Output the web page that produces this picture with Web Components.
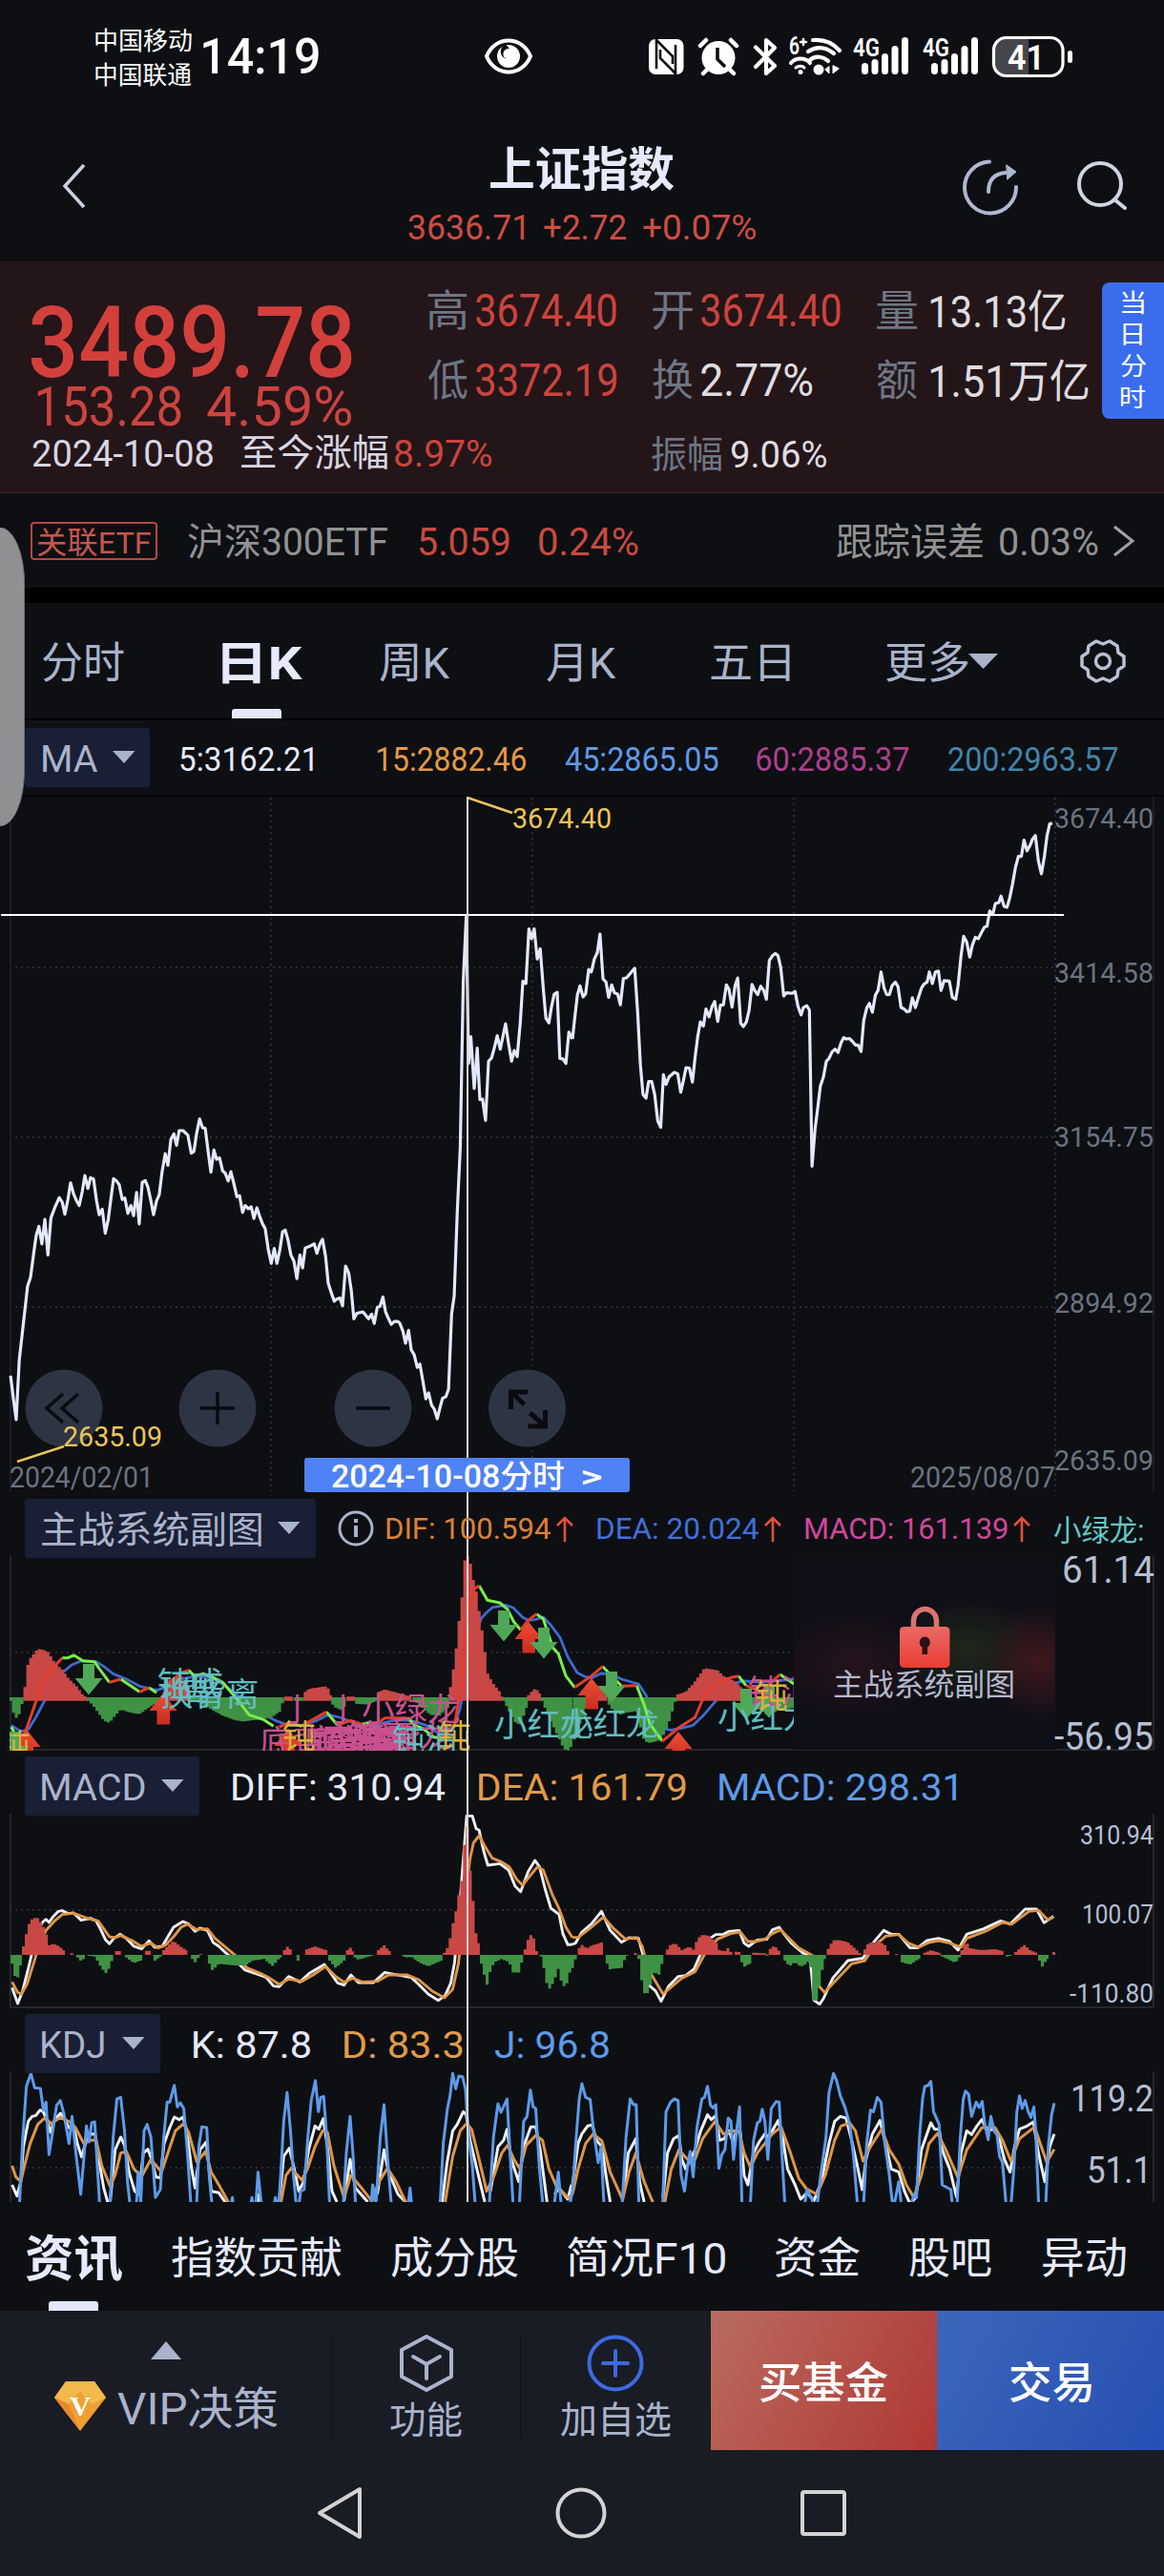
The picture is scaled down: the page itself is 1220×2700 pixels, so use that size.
<!DOCTYPE html>
<html lang="zh-CN">
  <head>
    <meta charset="UTF-8" />
    <meta name="viewport" content="width=device-width, initial-scale=1.0" />
    <title>上证指数</title>
    <style>
      body {
        margin: 0;
        width: 1220px;
        height: 2700px;
        overflow: hidden;
        background: #0d0f13;
        color: #e6eafc;
        font-family: Roboto, "Noto Sans CJK SC", sans-serif;
      }
      main {
        position: relative;
      }
    </style>
  </head>
  <body>
    <main>
      <phone-status></phone-status>
      <title-bar></title-bar>
      <quote-panel></quote-panel>
      <etf-row></etf-row>
      <period-tabs></period-tabs>
      <ma-row></ma-row>
      <chart-stack>
        <price-chart></price-chart>
        <sub-chart kind="dragon" box="305">
          <fit-text slot="name" w="230" s="39">主战系统副图</fit-text>
          <svg width="38" height="38" viewBox="0 0 38 38" fill="none" stroke="#a9b3cb" stroke-width="3" style="margin-left: 23px"><circle cx="19" cy="19" r="17" /><path d="M19 16v12M19 9v4" stroke-width="4" /></svg>
          <fit-text w="172" s="31" gap="13" dy="0" style="color: #dd8038">DIF: 100.594</fit-text>
          <up-mark></up-mark>
          <fit-text w="169" s="31" gap="25" dy="0" style="color: #4170d8">DEA: 20.024</fit-text>
          <up-mark></up-mark>
          <fit-text w="212" s="31" gap="25" dy="0" style="color: #d0489a">MACD: 161.139</fit-text>
          <up-mark></up-mark>
          <fit-text w="94" s="31" gap="24" style="color: #62c8c6">小绿龙:</fit-text>
        </sub-chart>
        <sub-chart kind="macd" box="183">
          <fit-text slot="name" w="108" s="39">MACD</fit-text>
          <fit-text w="223" s="39" gap="35">DIFF: 310.94</fit-text>
          <fit-text w="217" s="39" gap="35" style="color: #e39a48">DEA: 161.79</fit-text>
          <fit-text w="248" s="39" gap="35" style="color: #5d9bea">MACD: 298.31</fit-text>
        </sub-chart>
        <sub-chart kind="kdj" box="142">
          <fit-text slot="name" w="65" s="39">KDJ</fit-text>
          <fit-text w="122" s="39" gap="35">K: 87.8</fit-text>
          <fit-text w="124" s="39" gap="36" style="color: #e39a48">D: 83.3</fit-text>
          <fit-text w="119" s="39" gap="34" style="color: #5d9bea">J: 96.8</fit-text>
        </sub-chart>
      </chart-stack>
      <news-tabs></news-tabs>
      <bottom-bar></bottom-bar>
      <nav-keys></nav-keys>
      <side-handle></side-handle>
    </main>

    <script>
      // text squeezed or stretched so that its ink is exactly "w" px wide
      const ruler = document.createElement("canvas").getContext("2d");
      class FitText extends HTMLElement {
        connectedCallback() {
          if (this.shadowRoot) return;
          const w = +this.getAttribute("w");
          const dy = this.getAttribute("dy") || 2;
          const shadow = this.attachShadow({ mode: "open" });
          this.style.fontSize = this.getAttribute("s") + "px";
          this.style.width = w + "px";
          this.style.marginLeft = (this.getAttribute("gap") || 0) + "px";
          shadow.innerHTML = `
            <style>
              :host { display: block; flex: none; line-height: 1; white-space: nowrap; }
              span { display: block; width: max-content; transform-origin: 0 50%; }
            </style>
            <span><slot></slot></span>`;
          const cs = getComputedStyle(this);
          ruler.font = `${cs.fontWeight} ${cs.fontSize} ${cs.fontFamily}`;
          const m = ruler.measureText(this.textContent);
          const k = w / (m.actualBoundingBoxLeft + m.actualBoundingBoxRight);
          shadow.querySelector("span").style.transform =
            `translate(${m.actualBoundingBoxLeft * k}px, ${dy}px) scaleX(${k})`;
        }
      }
      customElements.define("fit-text", FitText);

      // small factory for the elements that only have markup
      function define(name, html) {
        customElements.define(
          name,
          class extends HTMLElement {
            connectedCallback() {
              if (this.shadowRoot) return;
              this.attachShadow({ mode: "open" }).innerHTML = html;
            }
          }
        );
      }

      define("up-mark", `
        <style>:host { display: block; flex: none; width: 18px; margin-left: 6px; height: 27px; }</style>
        <svg width="18" height="27" viewBox="0 0 18 27" fill="none" stroke="#e2513d" stroke-width="2.6"><path d="M9 27V2M1 10l8-8 8 8" /></svg>`);

      const bars4g = `
        <svg width="57" height="40" viewBox="0 0 57 40" fill="#fff">
          <text x="-1" y="20" font-size="26" font-weight="600" textLength="28" lengthAdjust="spacingAndGlyphs">4G</text>
          <rect x="8" y="27" width="7" height="12" rx="3.5" /><rect x="18.5" y="23" width="7" height="16" rx="3.5" />
          <rect x="29" y="17" width="7" height="22" rx="3.5" /><rect x="39.5" y="9" width="7" height="30" rx="3.5" /><rect x="50" y="0" width="7" height="39" rx="3.5" />
        </svg>`;

      define("phone-status", `
        <style>
          :host { display: flex; align-items: center; height: 118px; color: #fff; }
          .ops { display: grid; gap: 10px; margin-left: 100px; }
          svg { display: block; flex: none; overflow: visible; }
        </style>
        <div class="ops">
          <fit-text w="101" s="26">中国移动</fit-text>
          <fit-text w="101" s="26">中国联通</fit-text>
        </div>
        <fit-text w="121" s="52" gap="12" dy="1" style="font-weight: 500">14:19</fit-text>
        <svg width="52" height="38" viewBox="0 0 52 38" style="margin-left: 173px">
          <path d="M3 19C12 -3 40 -3 49 19C40 41 12 41 3 19Z" fill="none" stroke="#fff" stroke-width="4" />
          <circle cx="26" cy="19" r="12" fill="#fff" /><path d="M23 6.500a8 8 0 0 0 2 15.500a5.500 5.500 0 0 1 2-11z" fill="#0d0f13" />
        </svg>
        <svg width="37" height="37" viewBox="0 0 37 37" style="margin-left: 121px">
          <rect width="36.500" height="37" rx="7" fill="#fff" />
          <g fill="none" stroke="#0d0f13" stroke-width="2.600"><path d="M8 0v31M28 37V6" /><path d="M8 1l17 17v8M28 36L12 20V11" /></g>
        </svg>
        <svg width="42" height="39" viewBox="0 0 42 39" style="margin-left: 15px">
          <circle cx="21" cy="20.500" r="17.500" fill="#fff" />
          <path d="M2 8l6-6M40 8l-6-6M5 37l5-5M37 37l-5-5" stroke="#fff" stroke-width="4.500" stroke-linecap="round" />
          <path d="M20 10v12l8 8" fill="none" stroke="#0d0f13" stroke-width="3.600" />
        </svg>
        <svg width="25" height="39" viewBox="0 0 25 39" style="margin-left: 16px" fill="none" stroke="#fff" stroke-width="4.200" stroke-linejoin="round" stroke-linecap="round">
          <path d="M2 9.500L22 29l-9 8V2l9 8L2 30" />
        </svg>
        <svg width="56" height="42" viewBox="0 0 56 42" style="margin: -2px 0 0 12px" fill="none" stroke="#fff" stroke-width="4.200" stroke-linecap="round">
          <text x="0" y="20" font-size="25" font-weight="600" fill="#fff" stroke="none" textLength="11" lengthAdjust="spacingAndGlyphs">6</text>
          <path d="M12 7h6M15 4v6" stroke-width="2.500" />
          <path d="M25 5c11-1 21 3 28 11M20 17c9-6 18-5 27 2M2 29c5-6 15-6 20 0M22 26c5-5 14-4 19 1" />
          <path d="M7 34c3-2.500 7-2.500 9 0" stroke-width="3" />
          <circle cx="12" cy="38.500" r="2.500" fill="#fff" stroke="none" /><circle cx="31" cy="36" r="5.500" fill="#fff" stroke="none" />
          <path d="M42 33v7l-4-4zM46 32v8l6-5z" fill="#fff" stroke-width="1" />
        </svg>
        <div style="margin-left: 12px">${bars4g}</div>
        <div style="margin-left: 16px">${bars4g}</div>
        <svg width="86" height="44" viewBox="0 0 86 44" style="margin: 2px 0 0 15px">
          <path d="M16 2h22v39H16a14 14 0 0 1-14-14V16A14 14 0 0 1 16 2z" fill="#45464a" />
          <rect x="1.500" y="1.500" width="72.500" height="40" rx="13" fill="none" stroke="#fff" stroke-width="3.200" />
          <rect x="79" y="15" width="5" height="13" rx="2.500" fill="#fff" />
          <text x="16" y="35" font-size="36" font-weight="600" fill="#fff" textLength="39" lengthAdjust="spacingAndGlyphs">41</text>
        </svg>`);

      define("title-bar", `
        <style>
          :host { display: flex; height: 156px; }
          .mid { width: 364px; margin-left: 338px; color: #cd4d44; }
          .nums { display: flex; margin-top: 17px; }
          svg { display: block; flex: none; }
        </style>
        <svg width="26" height="48" viewBox="0 0 26 48" style="margin: 53px 0 0 64px" fill="none" stroke="#ccd0df" stroke-width="3.500"><path d="M24 2L4 24l20 22" /></svg>
        <div class="mid">
          <fit-text w="193" s="49" gap="86" dy="1" style="color: #e6eafc; font-weight: 700; margin-top: 35px">上证指数</fit-text>
          <div class="nums">
            <fit-text w="121" s="36">3636.71</fit-text>
            <fit-text w="86" s="36" gap="21">+2.72</fit-text>
            <fit-text w="118" s="36" gap="18">+0.07%</fit-text>
          </div>
        </div>
        <svg width="60" height="60" viewBox="0 0 60 60" style="margin: 48px 0 0 216px" fill="none" stroke="#adb8d0" stroke-width="4" stroke-linecap="round">
          <path d="M29 3.500A27 27 0 1 0 57 30M28 35c0-12 6-19 18-20" />
          <path d="M47 7l10 7-9 8z" fill="#adb8d0" stroke-width="1" />
        </svg>
        <svg width="56" height="52" viewBox="0 0 56 52" style="margin: 51px 0 0 60px" fill="none" stroke="#d0d4e2" stroke-width="4" stroke-linecap="round">
          <circle cx="25" cy="24" r="22" /><path d="M40 40l11 9" />
        </svg>`);

      define("quote-panel", `
        <style>
          :host { display: flex; height: 243px; background: #241519; border-bottom: 1px solid #2b2b2f; box-sizing: border-box; color: #cb443e; }
          .left { width: 416px; padding-left: 32px; }
          .row { display: flex; align-items: center; }
          .g { color: #6d7684; }
          .w { color: #dedde0; }
          .stats { display: grid; grid-template-columns: 235px 236px 236px; grid-template-rows: 72px 74px 82px; margin-top: 14px; }
          .tab { width: 65px; height: 143px; margin-top: 22px; background: #3a6cee; border-radius: 8px 0 0 8px; color: #fff;
            display: grid; align-content: start; justify-content: center; gap: 7px; padding-top: 7px; box-sizing: border-box; }
        </style>
        <div class="left">
          <fit-text w="337" s="103" dy="1" style="color: #d3403c; font-weight: 500; margin-top: 33px">3489.78</fit-text>
          <div class="row" style="margin-top: -13px">
            <fit-text w="151" s="58" gap="7" dy="0">153.28</fit-text>
            <fit-text w="151" s="58" gap="27" dy="0">4.59%</fit-text>
          </div>
          <div class="row" style="margin-top: 0">
            <fit-text w="189" s="39" gap="2" style="color: #d7d6e2">2024-10-08</fit-text>
            <fit-text w="154" s="39" gap="30" dy="1" style="color: #d7d6e2">至今涨幅</fit-text>
            <fit-text w="101" s="39" gap="7">8.97%</fit-text>
          </div>
        </div>
        <div class="stats">
          <div class="row"><fit-text class="g" w="42" s="45">高</fit-text><fit-text w="147" s="48" gap="9">3674.40</fit-text></div>
          <div class="row"><fit-text class="g" w="42" s="45" gap="1">开</fit-text><fit-text w="146" s="48" gap="9">3674.40</fit-text></div>
          <div class="row w"><fit-text class="g" w="42" s="45">量</fit-text><fit-text w="142" s="47" gap="14">13.13亿</fit-text></div>
          <div class="row"><fit-text class="g" w="42" s="45">低</fit-text><fit-text w="147" s="48" gap="9">3372.19</fit-text></div>
          <div class="row w"><fit-text class="g" w="42" s="45" gap="1">换</fit-text><fit-text w="117" s="48" gap="9">2.77%</fit-text></div>
          <div class="row w"><fit-text class="g" w="42" s="45">额</fit-text><fit-text w="166" s="47" gap="14">1.51万亿</fit-text></div>
          <div></div>
          <div class="row w"><fit-text class="g" w="74" s="39">振幅</fit-text><fit-text w="100" s="39" gap="9">9.06%</fit-text></div>
        </div>
        <div class="tab">
          <fit-text w="24" s="26">当</fit-text>
          <fit-text w="20" s="26" gap="2">日</fit-text>
          <fit-text w="26" s="26">分</fit-text>
          <fit-text w="25" s="26">时</fit-text>
        </div>`);

      define("etf-row", `
        <style>
          :host { display: flex; align-items: center; height: 99px; border-bottom: 16px solid #000; color: #929292; }
          .tag { box-sizing: border-box; width: 133px; height: 40px; margin-left: 32px; border: 2px solid #b9473f; border-radius: 4px; padding: 2px 5px; color: #c8554c; }
          .r { color: #c94a42; }
        </style>
        <div class="tag"><fit-text w="119" s="32">关联ETF</fit-text></div>
        <fit-text w="209" s="40" gap="32">沪深300ETF</fit-text>
        <fit-text class="r" w="94" s="41" gap="34">5.059</fit-text>
        <fit-text class="r" w="104" s="41" gap="31">0.24%</fit-text>
        <fit-text w="153" s="40" gap="208">跟踪误差</fit-text>
        <fit-text w="103" s="41" gap="18">0.03%</fit-text>
        <svg width="24" height="34" viewBox="0 0 24 34" style="margin-left: 15px" fill="none" stroke="#a2a2a2" stroke-width="3"><path d="M2 2l19 15L2 32" /></svg>`);

      define("period-tabs", `
        <style>
          :host { display: flex; align-items: center; height: 123px; border-bottom: 2px solid #020203; color: #a9b3cb; box-sizing: border-box; }
          .on { display: grid; align-content: end; height: 121px; width: 88px; margin-left: 103px; gap: 26px; color: #e6eafc; font-weight: 700; }
          .on i { height: 10px; width: 52px; margin-left: 10px; background: #e3e8fb; border-radius: 3px 3px 0 0; }
        </style>
        <fit-text w="86" s="45" gap="44" dy="3">分时</fit-text>
        <div class="on"><fit-text w="84" s="48" dy="3">日K</fit-text><i></i></div>
        <fit-text w="74" s="45" gap="77" dy="3">周K</fit-text>
        <fit-text w="73" s="45" gap="101" dy="3">月K</fit-text>
        <fit-text w="83" s="45" gap="99" dy="3">五日</fit-text>
        <fit-text w="86" s="45" gap="101" dy="3">更多</fit-text>
        <svg width="32" height="18" viewBox="0 0 32 18"><path d="M0 1h31L15.500 17z" fill="#a9b3cb" /></svg>
        <svg width="50" height="48" viewBox="-25 -24 50 48" style="margin-left: 84px" fill="none" stroke="#b8c0d4" stroke-width="3.500" stroke-linejoin="round">
          <path d="M-7-21L0-18L7-21L15-16L16-9L22-5V5L16 9L15 16L7 21L0 18L-7 21L-15 16L-16 9L-22 5V-5L-16-9L-15-16Z" />
          <circle r="7.500" />
        </svg>`);

      define("ma-row", `
        <style>
          :host { display: flex; align-items: center; height: 80px; border-bottom: 2px solid #050608; box-sizing: border-box; }
          .pick { display: flex; align-items: center; width: 131px; height: 62px; margin-left: 26px; background: #191f34; border-radius: 3px; color: #a9b3cb; }
        </style>
        <div class="pick">
          <fit-text w="57" s="39" gap="19">MA</fit-text>
          <svg width="24" height="14" viewBox="0 0 24 14" style="margin-left: 16px"><path d="M0 0h23.500L12 13z" fill="#a9b3cb" /></svg>
        </div>
        <fit-text w="139" s="35" gap="32">5:3162.21</fit-text>
        <fit-text w="156" s="35" gap="67" style="color: #e39a48">15:2882.46</fit-text>
        <fit-text w="161" s="35" gap="41" style="color: #6199e6">45:2865.05</fit-text>
        <fit-text w="160" s="35" gap="40" style="color: #ad3f8c">60:2885.37</fit-text>
        <fit-text w="178" s="35" gap="41" style="color: #4584a8">200:2963.57</fit-text>`);

      // wraps the four charts and draws the vertical cross hair over them
      define("chart-stack", `
        <style>
          :host { display: block; position: relative; height: 1473px; overflow: hidden; }
          i { position: absolute; left: 489px; top: 0; width: 2px; height: 1473px; background: #d8d6d4; }
          a { position: absolute; left: 319px; top: 693px; width: 341px; height: 36px; background: #4f82f4; border-radius: 3px; display: flex; align-items: center; color: #fff; font-weight: 500; }
        </style>
        <slot></slot><i></i>
        <a><fit-text w="243" s="33" gap="29" dy="1">2024-10-08分时</fit-text><fit-text w="19" s="33" gap="20" dy="1">&gt;</fit-text></a>`);

      /* ---- chart drawing. Traces are kept in grid units: 2.529 units = 1px across,
         the right half of each trace starts at 600px. ---- */
      const KX = 1 / 2.529;
      const HALF = 1517.4;
      const SLOT = 7.62;

      function pts(str, dx) {
        return str.split(";").map((part) =>
          part.trim().split(/\s+/).map((p) => p.split(",").map(Number)).map(([x, y]) => [x + dx, y])
        );
      }
      function trace(left, right, color, width = 2.9) {
        const all = [...pts(left, 0), ...(right ? pts(right, HALF) : [])];
        return all.map((p) =>
          `<polyline points="${p.map((q) => q.join()).join(" ")}" fill="none" stroke="${color}" stroke-width="${width}" stroke-linejoin="round" vector-effect="non-scaling-stroke"/>`
        ).join("");
      }
      // stepped columns, one per trading day, following the given outline
      function columns(left, right, base, color) {
        let d = "";
        for (const p of [...pts(left, 0), ...pts(right, HALF)]) {
          const from = p[0][0], to = p[p.length - 1][0];
          const n = Math.max(1, Math.round((to - from) / SLOT) + 1);
          for (let i = 0; i < n; i++) {
            const x = Math.min(from + i * SLOT, to);
            let k = 0;
            while (k < p.length - 2 && p[k + 1][0] < x) k++;
            const a = p[k], b = p[k + 1] || a;
            const y = b[0] === a[0] ? a[1] : a[1] + ((b[1] - a[1]) * (x - a[0])) / (b[0] - a[0]);
            d += `M${(x - 3.9).toFixed(1)} ${base}V${y.toFixed(1)}h7.8V${base}z`;
          }
        }
        return `<path d="${d}" fill="${color}"/>`;
      }
      function label(x, y, w, size, color, text, extra = "") {
        return `<text x="${x}" y="${y}" font-size="${size}" fill="${color}" textLength="${w}" lengthAdjust="spacingAndGlyphs" ${extra}>${text}</text>`;
      }
      const dots = (d) => `<path d="${d}" stroke="#2b2d31" stroke-width="2" stroke-dasharray="2 4" fill="none"/>`;

      const priceL = "28,1283 35,1330 43,1378 51,1250 62,1170 73,1090 81,1070 89,1020 96,980 103,960 111,998 119,945 127,1022 135,942 145,920 157,898 165,908 172,934 180,902 187,866 195,890 203,905 210,915 218,885 225,850 233,878 240,855 248,858 256,905 263,935 271,923 279,975 287,945 294,900 301,857 309,862 316,870 324,902 331,899 339,932 347,915 354,937 362,887 369,955 377,865 385,861 392,875 400,905 407,935 415,905 422,892 430,840 438,803 445,828 453,772 461,760 468,785 475,753 485,753 498,763 507,802 514,798 521,760 529,728 537,747 544,748 552,800 559,843 567,795 574,815 582,812 590,840 597,845 605,862 612,842 620,868 628,896 635,894 643,930 650,915 658,922 666,918 673,943 681,920 689,940 696,955 703,965 711,1010 719,1040 727,1008 734,1040 742,1010 749,972 756,968 763,988 771,1022 779,1035 787,1073 795,1022 802,1050 809,1007 824,1002 833,998 840,1018 848,998 855,988 863,1025 870,1083 878,1103 886,1122 893,1117 901,1115 908,1132 916,1046 924,1060 931,1098 938,1160 946,1148 962,1145 977,1160 985,1150 992,1170 1000,1135 1007,1133 1015,1113 1022,1145 1030,1160 1037,1172 1045,1166 1055,1166 1060,1170 1068,1187 1075,1213 1083,1185 1090,1227 1098,1238 1106,1265 1113,1258 1121,1295 1129,1333 1136,1320 1144,1347 1151,1355 1159,1376 1167,1350 1173,1332 1182,1328 1189,1312 1197,1150 1204,1110 1212,930 1220,790 1228,430 1236,288 1242,608 1248,550 1257,662 1265,575 1272,686 1279,685 1287,731 1295,603 1303,596 1311,572 1318,548 1326,577 1333,550 1340,522 1348,565 1356,603 1363,580 1371,593 1379,520 1386,430 1394,435 1402,317 1409,338 1416,317 1424,382 1432,360 1440,445 1447,510 1455,520 1462,485 1469,458 1477,454 1484,597 1492,598 1500,608 1508,540 1517,555";
      const priceR = "0,555 6,510 13,460 20,440 28,464 35,457 43,405 50,410 58,382 66,368 73,328 81,425 89,432 96,465 104,438 111,455 120,458 127,481 135,424 143,423 165,402 173,500 180,610 187,675 195,683 202,647 210,647 218,675 226,732 234,746 241,632 248,653 256,637 270,627 279,630 287,670 294,645 301,617 310,618 318,648 325,595 332,550 339,518 347,527 354,490 362,507 370,485 377,474 385,517 392,482 400,481 408,438 415,448 423,486 431,440 438,423 446,521 453,528 461,518 468,494 476,437 483,450 491,459 499,441 507,450 514,469 522,385 530,375 538,370 545,375 552,400 560,462 567,455 583,456 590,452 598,485 606,503 612,487 621,483 628,492 635,830 643,750 650,705 657,657 665,638 673,603 680,597 688,583 696,577 704,584 712,563 719,552 726,555 734,554 742,560 750,568 757,568 765,582 772,515 780,488 787,478 795,497 803,460 810,450 818,410 826,445 833,459 840,459 847,440 856,432 863,442 871,487 879,490 886,496 894,495 901,466 909,487 917,465 925,445 932,436 940,432 946,410 954,435 962,410 970,408 977,450 985,429 999,430 1007,465 1016,469 1022,440 1030,375 1037,333 1045,345 1053,378 1060,352 1068,335 1076,338 1084,325 1092,313 1099,311 1106,278 1114,286 1121,262 1130,260 1136,246 1144,268 1152,270 1159,250 1166,222 1174,185 1182,160 1190,160 1197,125 1205,148 1212,138 1220,122 1227,115 1235,170 1243,198 1251,160 1258,115 1265,90 1272,88";

      const knob = (x, d, w = 3.6) => `<circle cx="${x}" cy="1476" r="40.500" fill="#2d3443"/><path transform="translate(${x} 1476)" d="${d}" fill="none" stroke="#0a0b10" stroke-width="${w}"/>`;

      define("price-chart", `
        <style>:host { display: block; height: 731px; } svg { display: block; }</style>
        <svg width="1220" height="731" viewBox="0 835 1220 731">
          <path d="M11 835V1563M1209 835V1563" stroke="#1c1e23" stroke-width="2" />
          ${dots("M284 836V1563M558 836V1563M832 836V1563M1106 836V1563M16 1014H1106M16 1192H1106M16 1370H1106")}
          ${knob(67, "M-1-15l-17 15 17 15M15-15l-17 15 17 15")}
          ${knob(228, "M-18 0h36M0-17v34")}
          ${knob(391, "M-18 0h36")}
          ${knob(552.5, "M-17 1V-17H1M-17-17L-3-4M19 2V19H1M3 5L19 19", 5)}
          <g transform="translate(0 820) scale(${KX} ${1 / 2.063})">${trace(priceL, priceR, "#e3e8fb", 3.2)}</g>
          <path d="M1 959H1115" stroke="#fff" stroke-width="2" />
          <path d="M490 836L537 852M18 1532L67 1516" stroke="#ecc558" stroke-width="2.500" />
          ${label(537, 868, 104, 29, "#ecc558", "3674.40")}
          ${label(66, 1516, 104, 29, "#ecc558", "2635.09")}
          ${label(1105, 868, 104, 30, "#6c7280", "3674.40")}
          ${label(1105, 1030, 104, 30, "#6c7280", "3414.58")}
          ${label(1105, 1202, 104, 30, "#6c7280", "3154.75")}
          ${label(1105, 1376, 104, 30, "#6c7280", "2894.92")}
          ${label(1105, 1541, 104, 30, "#6c7280", "2635.09")}
          ${label(10, 1559, 151, 31, "#6c7280", "2024/02/01")}
          ${label(954, 1559, 152, 31, "#6c7280", "2025/08/07")}
        </svg>`);

      // ---- 主战系统副图 ----
      const up = (x, y) => `<path transform="translate(${x} ${y})" d="M0 0L14.500 18H7V32.500H-6.500V18H-14.500Z" fill="url(#hot)"/>`;
      const down = (x, y) => `<path transform="translate(${x} ${y})" d="M-6 0H6V15H14.500L0 32.500L-14.500 15H-6Z" fill="#4fa857"/>`;
      const word = (x, y, color, text) => `<text x="${x}" y="${y}" font-size="34.500" fill="${color}">${text}</text>`;
      const TEAL = "#62bcc0", PINK = "#c9508f", GOLD = "#d8b13c", RED = "#e43d2c", LIME = "#78f04c";

      function dragonChart() {
        return `
          <defs>
            <linearGradient id="hot" x1="0" y1="0" x2="0" y2="1"><stop offset="0" stop-color="#ee4d34" /><stop offset="1" stop-color="#c92c20" /></linearGradient>
            <linearGradient id="lock" x1="0" y1="0" x2="0" y2="1"><stop offset="0" stop-color="#ea6a66" /><stop offset="1" stop-color="#ea3d32" /></linearGradient>
            <radialGradient id="g1"><stop offset="0" stop-color="#3d1620" /><stop offset="1" stop-color="#3d1620" stop-opacity="0" /></radialGradient>
            <radialGradient id="g2"><stop offset="0" stop-color="#26301a" /><stop offset="1" stop-color="#26301a" stop-opacity="0" /></radialGradient>
            <radialGradient id="g3"><stop offset="0" stop-color="#5a1c22" /><stop offset="1" stop-color="#5a1c22" stop-opacity="0" /></radialGradient>
            <clipPath id="plot"><rect x="10" y="1630" width="822" height="205" /></clipPath>
            <clipPath id="veil"><rect x="832" y="1630" width="274" height="204" /></clipPath>
          </defs>
          <path d="M11 1631V1834M1209 1631V1834M10 1834H1209" stroke="#25272c" stroke-width="2" fill="none" />
          ${dots("M16 1732H832")}
          <g clip-path="url(#plot)">
            <g transform="translate(0 1560) scale(${KX} .33333)">
              ${trace(
                "30,745 55,765 75,758 95,720 115,675 140,620 165,580 190,555 215,543 255,545 275,560 300,583 335,600 370,622 415,635 440,625 480,600 520,590 560,595 590,615 635,655 695,708 730,730 765,745 800,745 840,730 870,712 900,720 940,738 980,748 1050,728 1090,730 1130,745 1160,768 1185,770 1205,745 1220,690 1245,520 1275,410 1290,390 1305,375 1340,367 1360,375 1385,405 1400,415 1420,412 1440,405 1460,430 1485,470 1505,530 1530,580 1550,592 1568,595",
                "50,597 75,582 100,583 130,600 175,615 195,650 215,720 240,755 260,760 285,755 320,745 350,710 380,668 420,620 450,605 500,610 587,600", "#3f6ad0", 2.8)}
              ${columns(
                "66,625 72,560 80,535 100,505 115,508 128,515 145,548 165,570 180,595 205,625 220,650 235,660;435,640 450,605 480,590 500,625;757,655 775,655;809,640 820,630 868,622 876,650;922,655 938,655;1003,640 1020,632 1050,642 1090,655;1194,625 1207,530 1215,435 1227,318 1233,210 1244,210 1252,275 1262,320 1272,400 1282,480 1292,580 1305,610 1325,640 1330,655;1401,650 1408,640 1420,628 1430,645",
                "50,655 60,620 80,630 90,655;279,648 300,640 320,615 350,565 385,572 400,590 430,605 446,625", 668, "#c94846")}
              ${columns(
                "28,668 33,700 45,725 55,700 60,668;234,668 245,680 260,705 275,730 290,738 305,715 320,695 345,705 370,710 400,685 425,668 430,668;505,668 530,675 560,695 590,715 620,728 645,733 680,728 720,720 745,700 750,668;782,668 802,668;882,680 890,690 905,697 916,682;945,677 975,680 998,668;1097,668 1120,690 1140,712 1165,715 1187,690;1335,668 1345,690 1365,735 1380,745 1395,690;1437,668 1455,720 1475,770 1495,820 1510,825 1517,800",
                "5,790 20,740 43,670;97,680 100,690 125,712 145,705 170,700 190,795 205,800 225,795 240,780 255,740 273,668;453,680 465,710 480,690 505,700 520,720 540,700 587,690", 657, "#3f9244")}
              ${trace("30,750 45,785 60,810;165,533 180,533 196,525 220,542 250,545 265,570 290,610;320,600 370,640;395,627 415,643;500,572 515,590 540,583 560,592 590,610 630,665 660,712 700,728 725,748;765,738 800,748;865,703 895,745;960,742 985,735;1080,722 1100,745 1120,755 1150,782 1170,785;1270,306 1292,352 1325,360 1345,380 1362,420 1380,445;1422,395 1440,410 1465,500 1480,520 1500,590 1523,626",
                "80,560 130,622;170,620 190,680 205,740 238,795;440,590 460,620;550,585 587,615", LIME, 3)}
              ${trace("60,775 66,770 100,655 115,600 135,570 165,533;290,610 320,600;370,640 395,627;430,625 460,600 480,580 500,572;740,750 765,738;810,740 865,703;895,745 930,730 960,742;1000,740 1020,722 1080,722;1180,780 1205,745 1225,600 1235,450 1245,360 1258,315 1270,306;1380,445 1400,415 1422,395",
                "5,626 45,595 80,560;130,622 170,620;238,795 285,750 325,720 350,650 375,620 420,595 440,590;460,620 500,640 550,585", RED, 3)}
            </g>
            ${down(93, 1744)}${up(171, 1775)}${down(528, 1688)}${up(554, 1700)}${down(570, 1706)}${up(620, 1759)}${down(641, 1752)}${up(711, 1815)}${up(28, 1813)}${up(302, 1812)}${down(15, 1815)}${down(782, 1770)}${down(806, 1768)}
            ${word(165, 1777, TEAL, "钝成")}${word(168, 1788, TEAL, "换背离")}${word(190, 1787, TEAL, "背")}
            ${word(294, 1804, PINK, "亅")}${word(342, 1804, PINK, "亅")}${word(379, 1804, PINK, "小绿龙")}
            ${word(272, 1838, PINK, "底背离")}${word(318, 1837, PINK, "底背离")}${word(327, 1841, PINK, "顶背离")}${word(336, 1835, PINK, "底背离")}${word(345, 1839, PINK, "背离")}${word(372, 1836, PINK, "底背")}${word(364, 1832, PINK, "钝离")}${word(440, 1831, PINK, "龙")}
            ${word(-3, 1842, GOLD, "钝")}
            ${word(296, 1832, GOLD, "钝")}${word(411, 1836, TEAL, "钝消")}${word(459, 1832, GOLD, "钝")}
            ${word(518, 1820, TEAL, "小红龙")}${word(587, 1819, TEAL, "小红龙")}${word(752, 1812, TEAL, "小红龙")}
            ${word(784, 1785, PINK, "钝消")}${word(791, 1790, GOLD, "钝")}
          </g>
          <g clip-path="url(#veil)">
            <rect x="832" y="1630" width="274" height="204" fill="#0f0f17" />
            <ellipse cx="895" cy="1745" rx="95" ry="60" fill="url(#g1)" opacity=".5" />
            <ellipse cx="1015" cy="1730" rx="75" ry="58" fill="url(#g2)" opacity=".75" />
            <ellipse cx="1090" cy="1742" rx="62" ry="62" fill="url(#g3)" opacity=".65" />
          </g>
          <path d="M957.500 1706V1699a12 12.500 0 0 1 24 0V1706" fill="none" stroke="#dc7370" stroke-width="5.500" />
          <rect x="943" y="1705" width="52.500" height="43" rx="4.500" fill="url(#lock)" />
          <path d="M969.300 1715.500a6 6 0 0 1 2.800 11V1734h-5.600V1726.500a6 6 0 0 1 2.800-11z" fill="#2a1216" />
          ${label(873, 1777, 191, 32, "#b3b8cc", "主战系统副图")}
          ${label(1113, 1659, 97, 40, "#b6bfd4", "61.14")}
          ${label(1105, 1834, 104, 40, "#b6bfd4", "-56.95")}`;
      }

      // ---- MACD ----
      function macdChart() {
        return `
          <path d="M11 1901V2104M1209 1901V2104M10 2104H1209" stroke="#25272c" stroke-width="2" fill="none" />
          ${dots("M16 2002H1106")}
          <g transform="translate(0 1840) scale(${KX} .33333)">
            ${trace("32,730 47,780 60,740 75,670 85,620 95,560 112,525 122,515 130,525 140,508 155,490 165,488 180,497 195,495 215,518 240,512 255,520 268,550 280,580 290,592 302,575 318,562 335,575 355,600 375,608 395,583 410,603 430,600 445,570 460,540 485,522 500,530 517,553 530,543 550,550 565,588 580,600 600,622 620,640 650,675 680,687 705,697 725,725 740,727 765,695 795,712 820,685 860,657 880,690 895,715 912,722 930,690 950,714 990,714 1020,682 1045,688 1090,698 1110,720 1135,750 1162,770 1180,755 1195,715 1205,650 1220,450 1237,190 1252,190 1262,230 1270,235 1282,300 1293,345 1325,340 1348,360 1365,410 1380,428 1400,365 1418,330 1430,350 1445,420 1460,480 1482,500 1492,560 1505,595 1517,594",
              "0,594 8,590 25,555 50,530 77,490 100,550 130,587 150,573 175,575 190,640 205,725 220,740 235,773 255,725 280,695 300,692 322,672 345,610 365,575 380,563 400,562 415,553 442,550 455,590 467,600 490,580 515,578 530,548 548,540 560,560 580,590 612,622 628,625 635,700 640,770 655,782 665,765 690,700 730,645 770,637 800,585 825,550 845,562 865,562 895,605 915,605 940,582 970,575 1000,585 1022,612 1045,562 1090,545 1135,520 1160,530 1200,483 1230,483 1250,526 1275,505", "#f0f1f8")}
            ${trace("32,712 47,745 57,750 72,718 90,650 105,590 122,550 145,520 165,500 195,496 235,513 260,520 275,545 290,570 305,573 320,566 350,582 375,600 400,590 420,605 440,595 460,570 480,540 497,530 520,547 550,545 570,575 600,605 630,635 655,668 690,685 715,700 740,720 765,703 800,710 830,690 863,663 890,695 912,713 935,700 960,712 1000,710 1030,690 1080,690 1110,705 1145,740 1178,762 1200,735 1215,655 1230,500 1245,330 1255,275 1270,252 1285,285 1305,323 1330,335 1350,350 1370,390 1385,408 1405,378 1425,350 1440,360 1465,440 1482,482 1500,540 1517,572",
              "0,572 15,572 45,545 82,508 110,545 140,577 170,572 185,600 200,670 220,710 240,750 265,725 290,700 325,680 355,615 385,577 420,560 445,555 465,585 485,585 510,578 530,560 552,548 570,570 600,605 635,628 650,720 668,745 700,705 740,655 775,645 800,600 830,568 865,563 890,590 918,603 945,588 970,582 1000,590 1030,603 1045,575 1100,550 1140,525 1165,530 1210,490 1235,487 1260,517 1275,508", "#de9647")}
            ${columns("62,600 70,560 77,530 85,515 98,508 108,525 121,550 128,598 140,592 155,598 168,612;190,622;309,615 318,615;388,614 396,614;434,612 445,598 460,583 475,598 493,612;532,624;754,612 760,600 772,612;813,610 835,600 864,612;921,612 928,603 934,616;1003,612 1018,597 1032,615;1178,620 1190,598 1198,540 1207,500 1215,445 1223,405 1231,285 1238,205 1246,355 1253,440 1261,555 1268,590;1392,610 1402,570 1409,563 1416,578 1422,615",
              "18,605 25,595 38,607 50,598 77,588;167,621;252,610 262,592 275,593 290,612 310,600 320,612 332,575 345,563 360,567 375,580 383,592 390,614 405,615 413,605 421,620;434,617 442,618;480,620 510,622;524,608 535,597 548,615;678,608 690,582 705,580 730,587 750,608 762,622;775,610 784,590 815,585 829,597 836,615;859,624;934,620 950,612 972,620;1032,612 1044,583 1052,605 1080,612 1120,609 1140,615;1175,618 1197,595 1213,612 1230,620;1276,618", 627, "#c94846")}
            ${columns("32,655 40,695 48,698 54,660;206,635 215,647 222,640;236,630 250,632;258,645 270,670 283,687 292,660 298,640;335,635 355,653 373,645;411,645 425,632;510,640 517,651 526,635;555,655 563,675 580,655 620,660 650,660 670,645 700,640 722,662 743,635;790,645;874,645 890,668 912,645;941,635 950,642 985,630;1070,632 1080,635 1090,632 1110,650 1135,663 1170,645;1276,655 1291,722 1299,680 1310,650 1330,640 1350,650 1360,682 1375,683 1383,650;1434,632 1442,670 1450,720 1458,735 1470,705 1480,670 1490,722 1500,729 1508,690 1520,650",
              "0,668 8,640;92,655 98,672 130,668 137,645 144,630;176,640 184,710 191,748 198,750 207,720 215,680 230,690 237,655;449,650 455,665 470,655;516,630;563,645 575,663 590,650 605,665 620,655 630,640 638,770 646,775 653,735 661,680 668,640;874,650 895,658 918,640;980,632 1015,652 1026,635;1153,632 1160,630;1238,645 1245,665 1258,640", 627, "#3f9244")}
          </g>
          ${label(1132, 1933, 77, 27.5, "#b6bfd4", "310.94")}
          ${label(1134, 2016, 75, 27.5, "#b6bfd4", "100.07")}
          ${label(1121, 2099, 88, 27.5, "#b6bfd4", "-110.80")}`;
      }

      // ---- KDJ, cut off by the tab row below ----
      function kdjChart() {
        return `
          <path d="M11 2171V2308M1209 2171V2308" stroke="#25272c" stroke-width="2" />
          ${dots("M16 2272H1106")}
          <g transform="translate(0 1840) scale(${KX} .33333)">
            ${trace("32,1350 45,1385 55,1340 62,1230 75,1150 85,1135 95,1132 106,1115 115,1120 125,1150 134,1185 145,1145 160,1125 170,1140 182,1170 195,1165 205,1220 216,1262 228,1215 240,1190 252,1190 262,1270 275,1360 288,1415;292,1404 305,1240 320,1200 330,1225 342,1310 357,1370 368,1380 380,1250 392,1238 402,1270 413,1325 425,1328 435,1220 450,1170 462,1137 475,1145 485,1137 495,1180 508,1300 517,1360 530,1240 547,1215 560,1370 580,1375 600,1410;675,1450 684,1380 695,1420;740,1404 752,1260 767,1235 778,1290 792,1370 805,1340 818,1240 835,1165 845,1175 857,1142 868,1230 880,1370 893,1404;912,1400 928,1270 942,1360 975,1404;1000,1380 1018,1240 1030,1310 1055,1380 1080,1410;1172,1404 1185,1280 1200,1180 1212,1160 1228,1120 1236,1130 1246,1210 1262,1290 1285,1404;1300,1370 1320,1230 1335,1210 1344,1175 1355,1270 1375,1340 1388,1230 1407,1168 1420,1168 1432,1240 1450,1404;1470,1380 1482,1360 1505,1395 1515,1350",
              "0,1350 15,1220 25,1190 40,1165 53,1162 63,1210 78,1230 90,1330 100,1404;135,1380 148,1250 168,1205 178,1340 190,1404;240,1390 252,1250 268,1205 282,1195 290,1270 300,1300 325,1240 340,1180 358,1130 368,1145 380,1132 390,1210 402,1205 415,1180 425,1215 435,1180 445,1185 455,1320 465,1350 480,1250 495,1215 510,1190 520,1200 545,1148 557,1200 570,1300 590,1350 605,1395 622,1375 640,1400 660,1340 680,1220 695,1150 710,1135 725,1140 740,1210 755,1290 768,1365 778,1270 795,1190 815,1148 830,1220 845,1300 865,1310 880,1370 895,1410 910,1390 925,1240 950,1155 960,1175 972,1175 980,1240 1000,1300 1018,1388 1030,1250 1045,1180 1058,1192 1072,1165 1085,1145 1100,1180 1115,1175 1130,1200 1145,1270 1160,1310 1172,1230 1185,1175 1205,1165 1222,1152 1235,1250 1252,1340 1265,1230 1277,1190", "#f0f1f8", 3)}
            ${trace("32,1290 42,1325 55,1340 65,1290 80,1220 100,1160 120,1138 135,1158 160,1138 185,1152 200,1170 222,1220 240,1210 255,1210 270,1290 292,1355 305,1320 320,1250 335,1245 355,1300 375,1325 400,1270 428,1310 445,1250 465,1180 487,1157 500,1185 522,1278 545,1245 560,1310 580,1350 608,1410;745,1404 758,1320 772,1298 800,1335 815,1300 835,1230 855,1180 868,1185 885,1290 912,1390 930,1320 955,1355 985,1400 1005,1340 1027,1298 1050,1340 1078,1410;1180,1404 1200,1260 1220,1180 1237,1157 1250,1175 1270,1270 1290,1370 1310,1320 1330,1250 1346,1225 1360,1265 1378,1300 1395,1225 1420,1195 1438,1210 1455,1300 1475,1355 1508,1392 1517,1380",
              "0,1380 15,1300 35,1220 55,1190 78,1212 100,1310 133,1397 150,1310 168,1250 190,1340 215,1410;245,1404 262,1300 282,1240 305,1270 325,1270 345,1205 378,1150 400,1190 425,1180 442,1185 455,1250 472,1295 490,1250 510,1220 530,1190 553,1168 575,1240 600,1330 620,1362 648,1380 670,1320 695,1210 712,1165 735,1155 750,1180 770,1275 790,1230 820,1175 840,1240 865,1285 885,1350 905,1390 925,1320 945,1220 968,1188 990,1240 1022,1328 1045,1240 1085,1170 1120,1170 1140,1210 1162,1275 1185,1205 1225,1168 1240,1220 1257,1278 1277,1238", "#de9647", 3)}
            ${trace("50,1450 60,1210 70,1040 82,1000 92,1045 107,1047 115,1115 122,1090 130,1255 140,1180 150,1100 160,1085 170,1130 183,1220 191,1135 203,1270 214,1380 222,1270 229,1165 236,1215 243,1155 251,1152 257,1270 266,1450;290,1450 300,1200 310,1080 320,1075 330,1180 338,1340 348,1450;360,1450 366,1310 373,1404 382,1180 390,1160 400,1200 412,1390 425,1365 434,1200 443,1090 450,1090 462,1037 470,1105 478,1092 487,1110 497,1250 508,1450;520,1450 527,1230 535,1168 548,1170 555,1330 565,1450;608,1450 616,1390 622,1450;660,1450 668,1390 676,1450 684,1310 692,1404 700,1450;722,1450 730,1390 738,1430 745,1300 752,1150 761,1060 770,1180 778,1320 788,1450 797,1370 806,1365 816,1200 825,1085 836,1022 844,1120 850,1075 858,1072 866,1200 875,1450;908,1450 918,1250 928,1135 936,1260 944,1450;980,1450 988,1350 996,1420 1008,1200 1018,1098 1028,1280 1040,1450;1078,1450 1087,1360 1094,1450;1165,1450 1175,1220 1186,1110 1193,1070 1200,1000 1208,1048 1216,1008 1226,1010 1234,1050 1242,1200 1252,1290 1262,1450;1295,1450 1308,1200 1320,1095 1328,1122 1344,1080 1352,1250 1362,1450;1375,1450 1388,1150 1397,1135 1406,1052 1413,1105 1420,1110 1430,1300 1442,1450;1465,1450 1480,1310 1490,1450;1505,1450 1517,1370",
              "0,1370 10,1200 18,1080 25,1032 35,1075 47,1082 55,1170 68,1280 76,1230 85,1450;130,1450 142,1200 153,1080 162,1098 169,1098 177,1450;238,1450 248,1120 260,1090 270,1080 280,1085 288,1320 297,1370 305,1290 312,1245 320,1325 330,1170 343,1080 350,1075 358,1040 366,1100 373,1108 380,1098 388,1298 396,1255 404,1240 413,1140 420,1150 427,1270 435,1180 443,1105 450,1450;470,1450 480,1210 490,1155 497,1150 503,1112 510,1150 518,1270 527,1110 540,1088 548,1090 555,1250 565,1450;610,1450 622,1365 635,1395 645,1450 658,1320 672,1200 680,1060 692,1000 700,1022 710,1070 722,1105 735,1160 745,1260 758,1450;770,1450 780,1220 790,1115 798,1120 808,1075 818,1090 828,1220 840,1320 850,1430 865,1340 875,1450;890,1450 905,1380 912,1390 920,1200 928,1080 934,1040 942,1038 950,1025 957,1120 972,1160 980,1350 1003,1365 1010,1450;1018,1450 1028,1200 1036,1080 1042,1055 1050,1065 1058,1135 1070,1090 1078,1107 1086,1088 1093,1160 1102,1208 1109,1135 1118,1180 1125,1190 1132,1260 1140,1280 1152,1450;1160,1450 1170,1300 1178,1120 1185,1070 1192,1110 1200,1085 1208,1120 1215,1138 1223,1105 1228,1180 1237,1450;1253,1450 1262,1220 1270,1130 1277,1093", "#5d9bea", 3)}
          </g>
          ${label(1122, 2213, 87, 38, "#b6bfd4", "119.2")}
          ${label(1139, 2288, 68, 38, "#b6bfd4", "51.1")}`;
      }

      const plots = {
        dragon: { top: 1631, height: 205, draw: dragonChart },
        macd: { top: 1901, height: 205, draw: macdChart },
        kdj: { top: 2171, height: 137, draw: kdjChart },
      };

      class SubChart extends HTMLElement {
        connectedCallback() {
          if (this.shadowRoot) return;
          const { top, height, draw } = plots[this.getAttribute("kind")];
          this.attachShadow({ mode: "open" }).innerHTML = `
            <style>
              :host { display: block; }
              header { display: flex; align-items: center; height: 62px; padding-top: 5px; margin-bottom: -2px; position: relative; z-index: 1; }
              .pick { display: flex; align-items: center; justify-content: space-between; box-sizing: border-box; height: 62px; width: ${this.getAttribute("box")}px;
                margin-left: 26px; padding: 0 16px 0 18px; background: #191f34; border-radius: 3px; color: #a9b3cb; }
              svg { display: block; }
            </style>
            <header>
              <div class="pick">
                <slot name="name"></slot>
                <svg width="24" height="14" viewBox="0 0 24 14"><path d="M0 0h23.500L12 13z" fill="#a9b3cb" /></svg>
              </div>
              <slot></slot>
            </header>
            <svg width="1220" height="${height}" viewBox="0 ${top} 1220 ${height}">${draw()}</svg>`;
        }
      }
      customElements.define("sub-chart", SubChart);

      define("news-tabs", `
        <style>
          :host { display: flex; align-items: center; height: 114px; }
          .on { display: grid; align-content: end; height: 114px; width: 101px; margin-left: 27px; gap: 19px; font-weight: 700; }
          .on i { height: 10px; width: 52px; margin-left: 24px; background: #e3e8fb; border-radius: 3px 3px 0 0; }
        </style>
        <div class="on"><fit-text w="101" s="52">资讯</fit-text><i></i></div>
        <fit-text w="178" s="45" gap="52">指数贡献</fit-text>
        <fit-text w="133" s="45" gap="52">成分股</fit-text>
        <fit-text w="165" s="45" gap="52">简况F10</fit-text>
        <fit-text w="88" s="45" gap="53">资金</fit-text>
        <fit-text w="86" s="45" gap="52">股吧</fit-text>
        <fit-text w="87" s="45" gap="54">异动</fit-text>`);

      define("bottom-bar", `
        <style>
          :host { display: grid; grid-template-columns: 348px 198px 199px 237px 238px; height: 146px; background: #191c25; color: #a9b3cb; }
          div { display: flex; flex-direction: column; align-items: center; box-sizing: border-box; }
          .cell { margin: 24px 0 11px; border-right: 1px solid #11131a; }
          .vip { flex-direction: row; }
          .buy { justify-content: center; color: #fff; font-weight: 500; padding-top: 2px; }
        </style>
        <div class="cell">
          <svg width="32" height="20" viewBox="0 0 32 20" style="margin-top: 8px"><path d="M0 19L16 0l16 19z" fill="#a9b3cb" /></svg>
          <div class="vip" style="margin-top: 22px">
            <svg width="56" height="52" viewBox="0 0 56 52">
              <path d="M13 0H43L55 17L28 52L1 17Z" fill="#ef9f33" /><path d="M13 0H43L55 17L40 24L28 10L16 24L1 17Z" fill="#f3b94c" /><path d="M16 24L28 52L1 17Z" fill="#e8892c" />
              <text x="28" y="36" text-anchor="middle" font-family="Liberation Serif" font-weight="700" font-size="30" fill="#fff">V</text>
            </svg>
            <fit-text w="168" s="47" gap="11">VIP决策</fit-text>
          </div>
        </div>
        <div class="cell">
          <svg width="58" height="62" viewBox="0 0 58 62" fill="none" stroke="#a9b3cb" stroke-width="4" stroke-linejoin="round">
            <path d="M29 3L55 17V45L29 59L3 45V17Z" /><path d="M15 24L29 32L43 24M29 32V47" stroke-linecap="round" />
          </svg>
          <fit-text w="75" s="39" dy="1" style="margin-top: 9px">功能</fit-text>
        </div>
        <div class="cell">
          <svg width="60" height="62" viewBox="0 0 60 62" fill="none" stroke="#3d6ae2" stroke-width="4">
            <circle cx="30" cy="31" r="27.500" /><path d="M17 31h26M30 18v26" stroke-linecap="round" />
          </svg>
          <fit-text w="115" s="39" dy="1" style="margin-top: 9px">加自选</fit-text>
        </div>
        <div class="buy" style="background: linear-gradient(120deg, #b96c60, #b03833)"><fit-text w="133" s="45">买基金</fit-text></div>
        <div class="buy" style="background: linear-gradient(120deg, #3d66ba, #264fb4)"><fit-text w="85" s="45">交易</fit-text></div>`);

      define("nav-keys", `
        <style>:host { display: flex; align-items: center; box-sizing: border-box; padding-left: 331px; height: 132px; background: #191c25; }</style>
        <svg width="52" height="58" viewBox="0 0 52 58" fill="none" stroke="#d3d3d3" stroke-width="4" stroke-linejoin="round"><path d="M46 4V54L4 29Z" /></svg>
        <svg width="54" height="54" viewBox="0 0 54 54" style="margin: 0 202px 0 199px" fill="none" stroke="#d3d3d3" stroke-width="4"><circle cx="27" cy="27" r="24.500" /></svg>
        <svg width="50" height="50" viewBox="0 0 50 50" fill="none" stroke="#d3d3d3" stroke-width="4"><rect x="3" y="3" width="44" height="44" rx="2" /></svg>`);

      // grey edge-swipe handle floating over the left side
      define("side-handle", `
        <style>:host { position: absolute; left: 0; top: 553px; width: 26px; height: 313px; box-sizing: border-box; background: #8f9092; border-right: 1px solid #6c6d70; border-radius: 0 26px 26px 0 / 0 58px 58px 0; z-index: 2; }</style>`);
    </script>
  </body>
</html>
